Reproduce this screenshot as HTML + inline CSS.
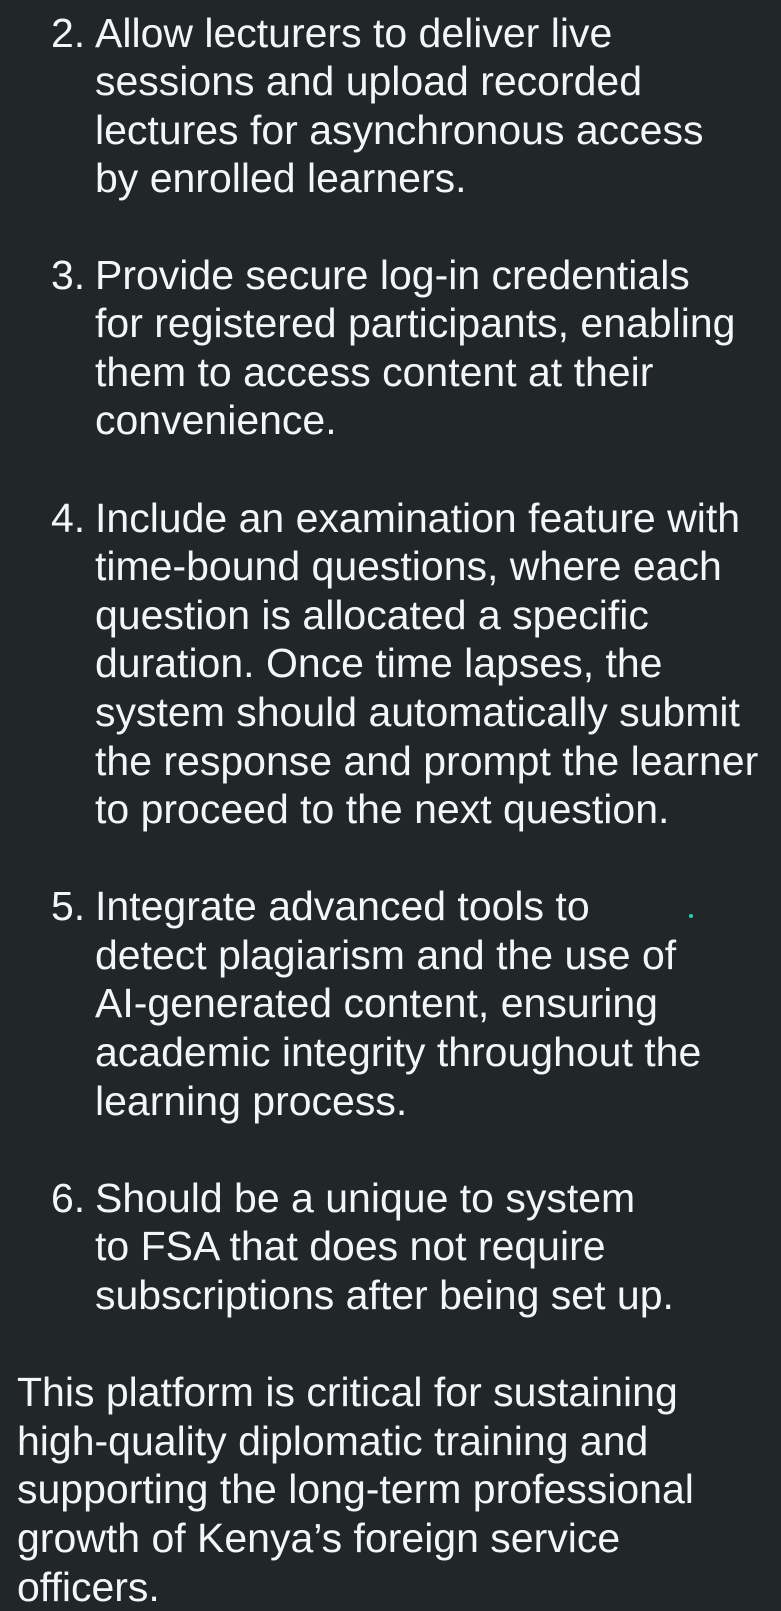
<!DOCTYPE html>
<html><head><style>
html,body{margin:0;padding:0;background:#212629;}
body{width:781px;height:1600px;overflow:hidden;position:relative;font-family:"Liberation Sans",sans-serif;color:#f4f5f5;font-size:41px;}
.l{position:absolute;white-space:nowrap;line-height:48px;height:48px;}
.n{left:51px}.t{left:95px}.p{left:17px}
.dot{position:absolute;left:689px;top:914px;width:4px;height:4px;border-radius:2px;background:#25d0b0;}
</style></head><body>
<div class="l n" style="top:9px">2.</div>
<div class="l t" style="top:9px">Allow lecturers to deliver live</div>
<div class="l t" style="top:57px">sessions and upload recorded</div>
<div class="l t" style="top:106px">lectures for asynchronous access</div>
<div class="l t" style="top:154px">by enrolled learners.</div>

<div class="l n" style="top:251px">3.</div>
<div class="l t" style="top:251px">Provide secure log-in credentials</div>
<div class="l t" style="top:299px">for registered participants, enabling</div>
<div class="l t" style="top:348px">them to access content at their</div>
<div class="l t" style="top:396px">convenience.</div>

<div class="l n" style="top:494px">4.</div>
<div class="l t" style="top:494px">Include an examination feature with</div>
<div class="l t" style="top:542px">time-bound questions, where each</div>
<div class="l t" style="top:591px">question is allocated a specific</div>
<div class="l t" style="top:639px">duration. Once time lapses, the</div>
<div class="l t" style="top:688px">system should automatically submit</div>
<div class="l t" style="top:737px">the response and prompt the learner</div>
<div class="l t" style="top:785px">to proceed to the next question.</div>

<div class="l n" style="top:882px">5.</div>
<div class="l t" style="top:882px">Integrate advanced tools to</div>
<div class="dot"></div>
<div class="l t" style="top:931px">detect plagiarism and the use of</div>
<div class="l t" style="top:979px">AI-generated content, ensuring</div>
<div class="l t" style="top:1028px">academic integrity throughout the</div>
<div class="l t" style="top:1077px">learning process.</div>

<div class="l n" style="top:1174px">6.</div>
<div class="l t" style="top:1174px">Should be a unique to system</div>
<div class="l t" style="top:1222px">to FSA that does not require</div>
<div class="l t" style="top:1271px">subscriptions after being set up.</div>

<div class="l p" style="top:1368px">This platform is critical for sustaining</div>
<div class="l p" style="top:1417px">high-quality diplomatic training and</div>
<div class="l p" style="top:1465px">supporting the long-term professional</div>
<div class="l p" style="top:1514px">growth of Kenya’s foreign service</div>
<div class="l p" style="top:1563px">officers.</div>
</body></html>
